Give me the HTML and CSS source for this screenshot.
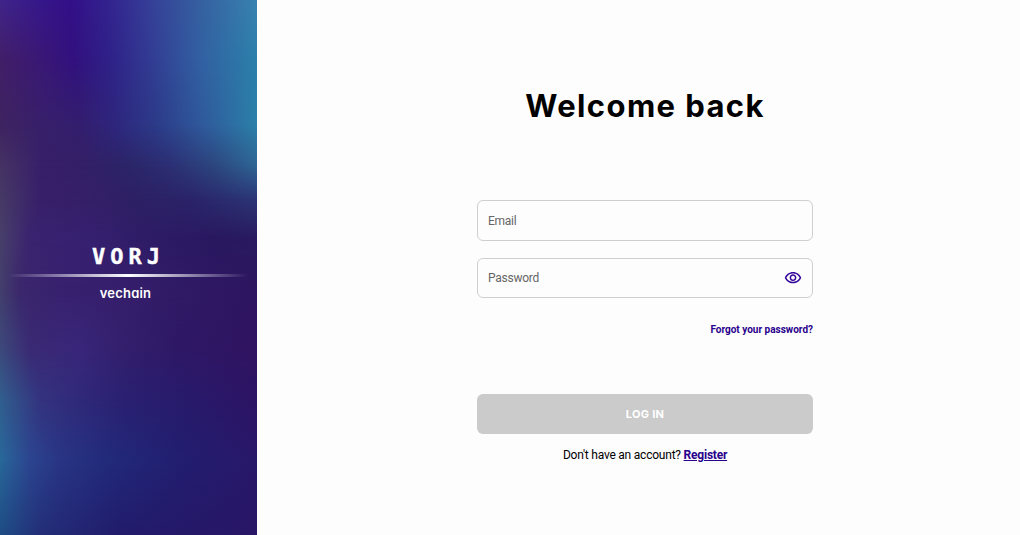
FILE: index.html
```html
<!DOCTYPE html>
<html lang="en">
<head>
    <meta charset="UTF-8">
    <meta name="viewport" content="width=device-width, initial-scale=1.0">
    <title>VORJ - Log in</title>
    <link rel="stylesheet" href="styles.css">
</head>
<body>
    <aside class="sidebar">
        <div class="glow glow-1"></div>
        <div class="glow glow-2"></div>
        <div class="glow glow-3"></div>
        <div class="glow glow-4"></div>
        <div class="glow glow-5"></div>
        <div class="glow glow-6"></div>
        <div class="glow glow-7"></div>
        <div class="glow glow-8"></div>
        <div class="glow glow-9"></div>
        <div class="glow glow-10"></div>
        <div class="brand">
            <div class="logo">VORJ</div>
            <div class="divider"></div>
            <div class="vendor">vechain</div>
        </div>
    </aside>

    <main class="content">
        <h1>Welcome back</h1>
        <form class="login">
            <div class="field email">
                <input type="email" placeholder="Email" aria-label="Email">
            </div>
            <div class="field password">
                <input type="password" id="password" placeholder="Password" aria-label="Password">
                <button type="button" class="toggle" id="toggle" aria-label="Show password">
                    <svg width="18" height="18" viewBox="0 0 24 24" fill="currentColor">
                        <path d="M12 6c3.79 0 7.17 2.13 8.82 5.5C19.17 14.87 15.79 17 12 17s-7.17-2.13-8.82-5.5C4.83 8.13 8.21 6 12 6m0-2C7 4 2.73 7.11 1 11.5 2.73 15.89 7 19 12 19s9.27-3.11 11-7.5C21.27 7.11 17 4 12 4m0 5c1.38 0 2.5 1.12 2.5 2.5S13.38 14 12 14s-2.5-1.12-2.5-2.5S10.62 9 12 9m0-2c-2.48 0-4.5 2.02-4.5 4.5S9.52 16 12 16s4.5-2.02 4.5-4.5S14.48 7 12 7"/>
                    </svg>
                </button>
            </div>
            <a class="forgot" href="#">Forgot your password?</a>
            <button type="submit" class="submit" disabled>LOG IN</button>
            <p class="signup">Don't have an account? <a href="#">Register</a></p>
        </form>
    </main>

    <script>
        document.getElementById('toggle').addEventListener('click', () => {
            const password = document.getElementById('password');
            password.type = password.type === 'password' ? 'text' : 'password';
        });
    </script>
</body>
</html>
```
FILE: styles.css
```css
* {
    box-sizing: border-box;
}

body {
    display: flex;
    height: 100vh;
    margin: 0;
    font-family: Roboto, sans-serif;
    background: #fdfdfd;
    overflow: hidden;
}

.sidebar {
    position: relative;
    display: flex;
    align-items: center;
    flex: 0 0 257px;
    background: linear-gradient(90deg, #40258a 0, #36178a 40px, #330f88 70px, #33248f 110px, #363f98 150px, #3660a0 200px, #3882b0 257px);
}

/* each band fades in over the one above it */
.glow {
    position: absolute;
    inset: 0;
    -webkit-mask-image: linear-gradient(transparent var(--from), #000 var(--to));
    mask-image: linear-gradient(transparent var(--from), #000 var(--to));
}

.glow-1 {
    --from: 0px;
    --to: 60px;
    background: linear-gradient(90deg, #421f68 0, #3a1875 40px, #32117f 75px, #2f2188 110px, #323b92 150px, #3260a2 200px, #2b80aa 257px);
}

.glow-2 {
    --from: 60px;
    --to: 125px;
    background: linear-gradient(90deg, #3e2360 0, #38206a 40px, #331e6e 80px, #2e267d 115px, #2c3a88 155px, #2f5b9c 205px, #2b80a8 257px);
}

.glow-3 {
    --from: 125px;
    --to: 165px;
    background: linear-gradient(90deg, #463363 0, #38206a 40px, #341f66 80px, #2c2468 125px, #2c2f74 170px, #2c477f 215px, #2e6696 257px);
}

.glow-4 {
    --from: 165px;
    --to: 200px;
    background: linear-gradient(90deg, #463a66 0, #38206a 40px, #351f69 90px, #2d2064 135px, #2a2369 190px, #2b3575 257px);
}

.glow-5 {
    --from: 200px;
    --to: 238px;
    background: linear-gradient(90deg, #48406a 0, #3a2370 30px, #362070 90px, #2e1c66 150px, #291860 215px, #291a60 257px);
}

.glow-6 {
    --from: 238px;
    --to: 290px;
    background: linear-gradient(90deg, #433f6c 0, #3b276c 20px, #38216f 60px, #361f6c 120px, #301a66 180px, #2e1560 257px);
}

.glow-7 {
    --from: 290px;
    --to: 350px;
    background: linear-gradient(90deg, #3c4a7c 0, #3a2a74 30px, #39267a 80px, #33206d 120px, #2e1866 180px, #301462 257px);
}

.glow-8 {
    --from: 350px;
    --to: 400px;
    background: linear-gradient(90deg, #315f8e 0, #34337f 40px, #30297a 80px, #2a2072 125px, #281b6c 180px, #2d1464 257px);
}

.glow-9 {
    --from: 400px;
    --to: 460px;
    background: linear-gradient(90deg, #28689a 0, #2c4590 30px, #283584 60px, #222a7a 110px, #221e70 180px, #29186a 257px);
}

.glow-10 {
    --from: 460px;
    --to: 535px;
    background: linear-gradient(90deg, #1e4c84 0, #232e78 40px, #221b6c 120px, #291666 257px);
}

.brand {
    position: relative;
    width: 240px;
    margin: 11px 0 0 8px;
    color: #fff;
    text-align: center;
}

.logo {
    font-family: "DejaVu Sans Mono", monospace;
    font-size: 22px;
    font-weight: bold;
    line-height: 26px;
    letter-spacing: 5px;
    text-indent: 1px;
    -webkit-text-stroke: 0.4px #fff;
}

.divider {
    height: 3px;
    margin: 4px 0 7px;
    background: linear-gradient(90deg, transparent, #fff 50%, transparent);
}

.vendor {
    font-family: Inter, sans-serif;
    font-size: 13px;
    font-weight: 600;
    line-height: 18px;
    letter-spacing: 0.2px;
    text-indent: -5px;
    /* single-storey a */
    font-feature-settings: "cv11";
}

.content {
    display: flex;
    flex: 1;
    flex-direction: column;
    align-items: center;
    padding: 82px 0 0 13px;
}

h1 {
    margin: 0 0 70px;
    font-family: Inter, sans-serif;
    font-size: 31px;
    font-weight: 700;
    line-height: 48px;
    letter-spacing: 1.4px;
    color: #000;
}

.login {
    display: flex;
    flex-direction: column;
    width: 336px;
}

.field {
    display: flex;
    align-items: center;
    padding: 0 10px;
    border: 1px solid #cfcfcf;
    border-radius: 6px;
}

.email {
    height: 41px;
    margin-bottom: 17px;
}

.password {
    height: 40px;
}

.field input {
    flex: 1;
    min-width: 0;
    padding: 0;
    border: none;
    outline: none;
    background: transparent;
    font-family: Roboto, sans-serif;
    font-size: 12px;
    letter-spacing: -0.25px;
}

.field input::placeholder {
    color: #666;
}

.toggle {
    display: flex;
    padding: 0;
    border: none;
    background: none;
    color: #35089a;
    cursor: pointer;
}

a {
    color: #28008c;
    font-weight: 700;
}

.forgot {
    align-self: flex-end;
    margin-top: 25px;
    font-size: 10px;
    line-height: 14px;
    text-decoration: none;
}

.submit {
    height: 40px;
    margin-top: 57px;
    border: none;
    border-radius: 6px;
    background: #cbcbcb;
    color: #fff;
    font-family: Inter, sans-serif;
    font-size: 11px;
    font-weight: 700;
    letter-spacing: 0.3px;
}

.signup {
    margin: 13px 0 0;
    font-size: 12px;
    line-height: 16px;
    letter-spacing: -0.22px;
    text-align: center;
    color: #000;
}
```
